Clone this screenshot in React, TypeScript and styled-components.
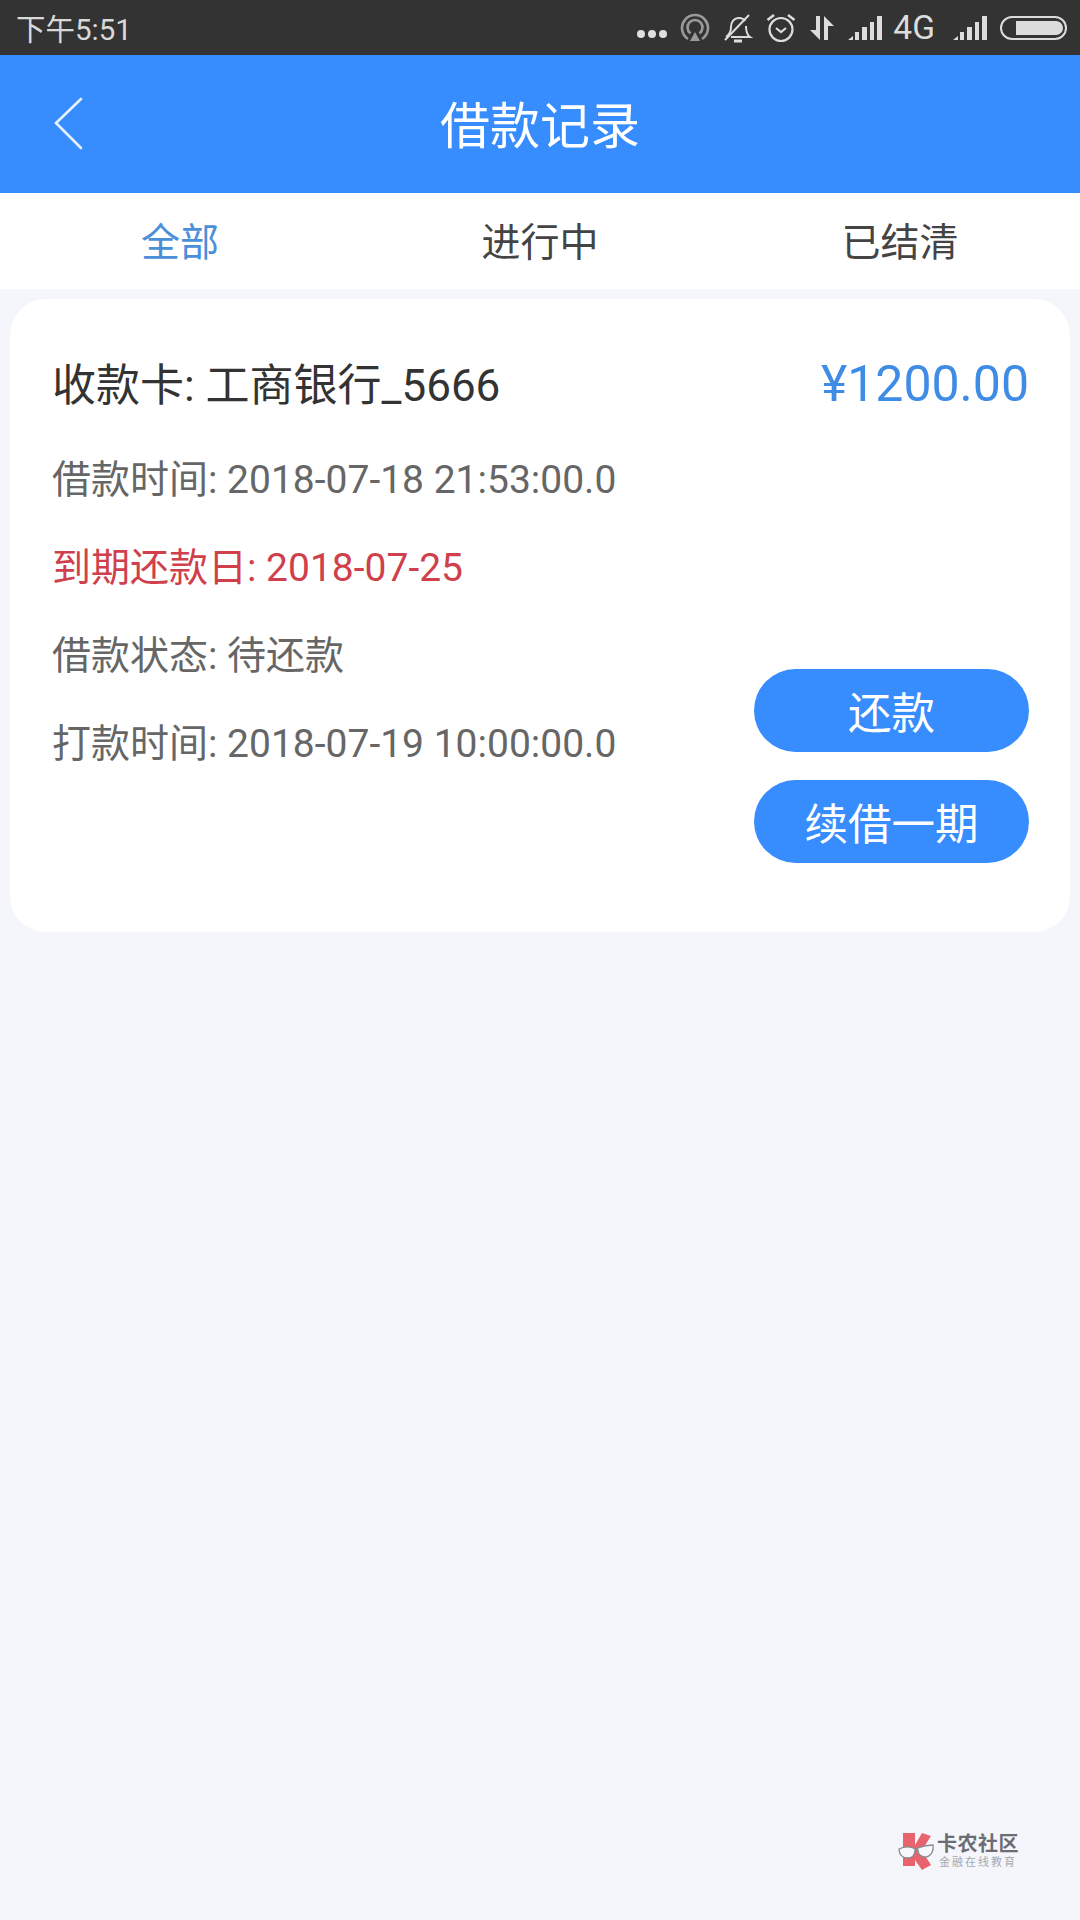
import React from 'react';
import styled, { createGlobalStyle } from 'styled-components';

const FONT = `Roboto, "Noto Sans CJK SC", sans-serif`;

const GlobalStyle = createGlobalStyle`
  html, body {
    margin: 0;
    padding: 0;
    background: #f4f6fb;
  }
  * {
    box-sizing: border-box;
  }
`;

const Page = styled.div`
  width: 1080px;
  height: 1920px;
  display: flex;
  flex-direction: column;
  background: #f4f6fb;
  font-family: ${FONT};
  overflow: hidden;
`;

const StatusBar = styled.div`
  height: 55px;
  flex: none;
  display: flex;
  align-items: center;
  justify-content: space-between;
  padding: 0 13px 0 16px;
  background: #333333;
  color: #d8d8d8;
`;

const Clock = styled.span`
  font-size: 29.5px;
  line-height: 55px;
  padding-top: 5px;
`;

const StatusIcons = styled.div`
  display: flex;
  align-items: center;
  gap: 13px;
  padding-top: 1px;
`;

const NetworkLabel = styled.span`
  margin: 0 5px 0 -2px;
  font-size: 33.5px;
  line-height: 30px;
  color: #dcdcdc;
`;

const NavBar = styled.header`
  height: 138px;
  flex: none;
  display: grid;
  grid-template-columns: 1fr auto 1fr;
  align-items: center;
  background: #378cfe;
`;

const BackButton = styled.button`
  justify-self: start;
  margin-left: 52px;
  padding: 0;
  border: 0;
  background: none;
  display: flex;
`;

const NavTitle = styled.h1`
  margin: 0 0 4px;
  font-size: 50px;
  font-weight: 400;
  color: #ffffff;
`;

const Tabs = styled.nav`
  height: 96px;
  flex: none;
  display: grid;
  grid-template-columns: 1fr 1fr 1fr;
  align-items: center;
  padding-bottom: 4px;
  background: #ffffff;
`;

const Tab = styled.div<{ $active?: boolean }>`
  text-align: center;
  font-size: 39px;
  color: ${p => (p.$active ? '#4a8fd8' : '#444444')};
`;

const Card = styled.section`
  flex: none;
  height: 633px;
  margin: 10px 10px 0;
  padding: 58px 41px 0 42px;
  display: flex;
  flex-direction: column;
  background: #ffffff;
  border-radius: 36px;
`;

const CardHead = styled.div`
  display: flex;
  align-items: center;
  justify-content: space-between;
  height: 54px;
`;

const CardTitle = styled.span`
  margin-bottom: 4px;
  font-size: 44px;
  color: #333333;
`;

const Amount = styled.span`
  font-size: 50px;
  color: #3f8ce6;
`;

const CardBody = styled.div`
  display: flex;
  justify-content: space-between;
  margin-top: 25px;
`;

const Details = styled.div`
  display: flex;
  flex-direction: column;
`;

const DetailRow = styled.div<{ $alert?: boolean }>`
  height: 88px;
  line-height: 88px;
  font-size: 39px;
  color: ${p => (p.$alert ? '#cf3f4c' : '#666666')};
`;

const Actions = styled.div`
  display: flex;
  flex-direction: column;
  gap: 28px;
  padding-top: 233px;
`;

const ActionButton = styled.button`
  width: 275px;
  height: 83px;
  border: 0;
  border-radius: 42px;
  padding: 0;
  background: #378cfe;
  color: #ffffff;
  font-family: ${FONT};
  font-size: 43.5px;
`;

const Watermark = styled.div`
  margin-top: auto;
  margin-right: 61px;
  margin-bottom: 49px;
  align-self: flex-end;
  display: flex;
  align-items: center;
  gap: 2px;
`;

const WatermarkText = styled.div`
  display: flex;
  flex-direction: column;
  align-items: center;
`;

const WatermarkName = styled.span`
  font-size: 20px;
  line-height: 22px;
  font-weight: 700;
  letter-spacing: 0.5px;
  color: #6a6d72;
`;

const WatermarkSlogan = styled.span`
  font-size: 11px;
  line-height: 15px;
  letter-spacing: 2px;
  color: #a6a9ae;
`;

const Dots = () => (
  <svg width="30" height="30" viewBox="0 0 30 30" fill="#e0e0e0">
    <circle cx="4" cy="21" r="4" />
    <circle cx="15" cy="21" r="4" />
    <circle cx="26" cy="21" r="4" />
  </svg>
);

const HotspotIcon = () => (
  <svg width="30" height="30" viewBox="0 0 30 30" fill="none" stroke="#9a9a9a" strokeWidth="2.6">
    <path d="M8 26A13 13 0 1 1 22 26" />
    <path d="M10.5 20.5A7.5 7.5 0 1 1 19.5 20.5" />
    <path d="M15 19l5 9H10z" fill="#9a9a9a" stroke="none" />
  </svg>
);

const MuteBellIcon = () => (
  <svg width="30" height="30" viewBox="0 0 30 30" fill="none" stroke="#dcdcdc" strokeWidth="2">
    <path d="M3 24c3-2 5-4 5-10 0-5 3-9 8-9 3 0 5 1 6 3M23 13c0 5 1 9 4 11H8" />
    <path d="M2 27L26 2" />
    <path d="M11 28h8" strokeWidth="3" />
  </svg>
);

const AlarmIcon = () => (
  <svg width="30" height="30" viewBox="0 0 30 30" fill="none" stroke="#dcdcdc" strokeWidth="2.2">
    <circle cx="15" cy="16.5" r="11.5" />
    <path d="M10 15l5 4 5-4" />
    <path d="M1.5 7L8 2M28.5 7L22 2" strokeWidth="2.6" />
  </svg>
);

const TransferIcon = () => (
  <svg width="26" height="26" viewBox="0 0 26 26" fill="#dcdcdc">
    <path d="M7 1h4v24L1 15h6z" />
    <path d="M15 25h4V11h6L15 1z" />
  </svg>
);

const SignalIcon = () => (
  <svg width="34" height="24" viewBox="0 0 34 24" fill="#dcdcdc">
    <path d="M0 24l5-4v4z" />
    <rect x="7" y="16" width="4" height="8" />
    <rect x="14" y="11" width="5" height="13" />
    <rect x="22" y="6" width="4" height="18" />
    <rect x="29" y="0" width="5" height="24" />
  </svg>
);

const BatteryIcon = () => (
  <svg width="67" height="24" viewBox="0 0 67 24">
    <rect x="1" y="1" width="65" height="22" rx="11" fill="none" stroke="#dcdcdc" strokeWidth="2" />
    <path d="M16 5h40a7 7 0 0 1 0 14H16z" fill="#dcdcdc" />
  </svg>
);

const ChevronIcon = () => (
  <svg width="32" height="54" viewBox="0 0 32 54" fill="none" stroke="#e8f2ff" strokeWidth="2.6" strokeLinecap="round">
    <path d="M29 2L4 26l25 25" />
  </svg>
);

// red K with a pair of glasses across the middle
const LogoMark = () => (
  <svg width="37" height="39" viewBox="0 0 37 39">
    <path d="M5 1h12v12L24 1l9 3-7 11v7l7 11-9 5-7-10v6H5z" fill="#e8636e" />
    <path d="M1 17c4-2 9-3 14-1 2 1 4 1 5 0 5-2 10-3 15-3 1 7-3 12-8 12-4 0-7-3-7-7h-3c0 5-3 8-8 8-5 0-8-4-8-9z" fill="#f7f8fb" stroke="#8a8c8f" strokeWidth="1.3" />
  </svg>
);

const tabs = [
  { label: '全部', active: true },
  { label: '进行中', active: false },
  { label: '已结清', active: false },
];

const details = [
  { text: '借款时间: 2018-07-18 21:53:00.0' },
  { text: '到期还款日: 2018-07-25', alert: true },
  { text: '借款状态: 待还款' },
  { text: '打款时间: 2018-07-19 10:00:00.0' },
];

export default function App() {
  return (
    <Page>
      <GlobalStyle />
      <StatusBar>
        <Clock>下午5:51</Clock>
        <StatusIcons>
          <Dots />
          <HotspotIcon />
          <MuteBellIcon />
          <AlarmIcon />
          <TransferIcon />
          <SignalIcon />
          <NetworkLabel>4G</NetworkLabel>
          <SignalIcon />
          <BatteryIcon />
        </StatusIcons>
      </StatusBar>
      <NavBar>
        <BackButton>
          <ChevronIcon />
        </BackButton>
        <NavTitle>借款记录</NavTitle>
      </NavBar>
      <Tabs>
        {tabs.map(tab => (
          <Tab key={tab.label} $active={tab.active}>
            {tab.label}
          </Tab>
        ))}
      </Tabs>
      <Card>
        <CardHead>
          <CardTitle>收款卡: 工商银行_5666</CardTitle>
          <Amount>¥1200.00</Amount>
        </CardHead>
        <CardBody>
          <Details>
            {details.map(row => (
              <DetailRow key={row.text} $alert={row.alert}>
                {row.text}
              </DetailRow>
            ))}
          </Details>
          <Actions>
            <ActionButton>还款</ActionButton>
            <ActionButton>续借一期</ActionButton>
          </Actions>
        </CardBody>
      </Card>
      <Watermark>
        <LogoMark />
        <WatermarkText>
          <WatermarkName>卡农社区</WatermarkName>
          <WatermarkSlogan>金融在线教育</WatermarkSlogan>
        </WatermarkText>
      </Watermark>
    </Page>
  );
}
